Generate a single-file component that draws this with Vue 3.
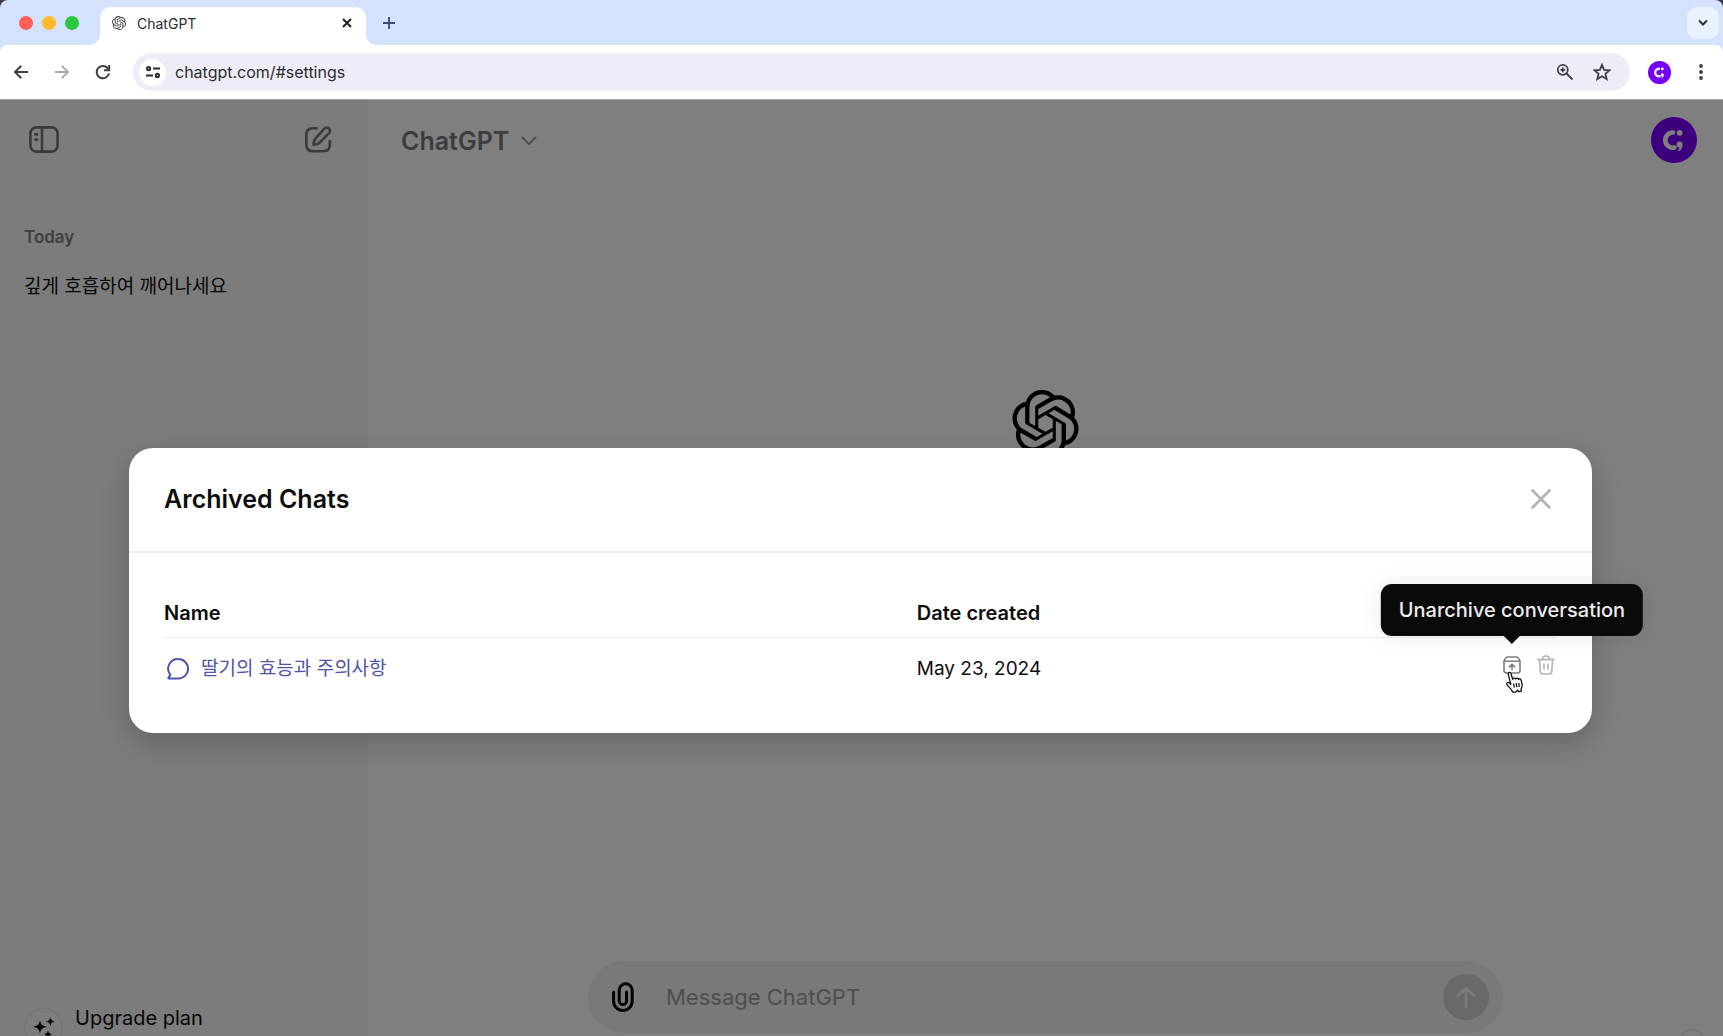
<template>
  <div class="browser">
    <header class="chrome">
      <div class="tab-strip">
        <div class="window-controls">
          <button class="light red" aria-label="Close window"></button>
          <button class="light yellow" aria-label="Minimize window"></button>
          <button class="light green" aria-label="Zoom window"></button>
        </div>
        <div class="tab">
          <svg class="favicon" viewBox="0 0 24 24" fill="currentColor"><path :d="logoPath" /></svg>
          <span class="tab-title">ChatGPT</span>
          <button class="icon-btn tab-close" aria-label="Close tab">
            <svg width="10" height="10" viewBox="0 0 10 10" fill="none" stroke="currentColor" stroke-width="2"><path d="M1 1l8 8M9 1L1 9" /></svg>
          </button>
        </div>
        <button class="icon-btn new-tab" aria-label="New tab">
          <svg width="12" height="12" viewBox="0 0 12 12" fill="none" stroke="currentColor" stroke-width="1.8"><path d="M6 0v12M0 6h12" /></svg>
        </button>
        <button class="icon-btn tab-search" aria-label="Search tabs">
          <svg width="10" height="8" viewBox="0 0 10 8" fill="none" stroke="currentColor" stroke-width="2"><path d="M1 1.5l4 4 4-4" /></svg>
        </button>
      </div>

      <div class="toolbar">
        <nav class="nav-buttons">
          <button class="icon-btn" aria-label="Back">
            <svg width="16" height="16" viewBox="0 0 16 16" fill="none" stroke="currentColor" stroke-width="2"><path d="M15 8H2M8.2 1.8L2 8l6.2 6.2" /></svg>
          </button>
          <button class="icon-btn disabled" aria-label="Forward">
            <svg width="16" height="16" viewBox="0 0 16 16" fill="none" stroke="currentColor" stroke-width="1.8"><path d="M1 8h13M7.8 1.8L14 8l-6.2 6.2" /></svg>
          </button>
          <button class="icon-btn" aria-label="Reload">
            <svg width="16" height="16" viewBox="0 0 16 16" fill="none" stroke="currentColor" stroke-width="2"><path d="M14 9.4A6.2 6.2 0 1 1 12.6 4L14 5.5" /><path d="M14.2 1v5.2H9" /></svg>
          </button>
        </nav>
        <div class="omnibox">
          <button class="icon-btn site-info" aria-label="View site information">
            <svg width="14" height="12" viewBox="0 0 14 12" fill="none" stroke="currentColor" stroke-width="2"><circle cx="2.600" cy="2.600" r="1.600" /><path d="M7 2.600h7M0 9.400h7" /><circle cx="11.400" cy="9.400" r="1.600" /></svg>
          </button>
          <input v-model="url" class="url" type="text" aria-label="Address" />
          <button class="icon-btn" aria-label="Zoom">
            <svg width="18" height="18" viewBox="0 0 18 18" fill="none" stroke="currentColor" stroke-width="1.8"><circle cx="6.8" cy="6.8" r="5" /><path d="M10.5 10.5l6 6M6.8 4.4v4.8M4.4 6.8h4.8" /></svg>
          </button>
          <button class="icon-btn" aria-label="Bookmark this tab">
            <svg width="18" height="18" viewBox="0 0 18 18" fill="none" stroke="currentColor" stroke-width="1.8"><path d="M9 1.8l2.1 5 5.4.5-4.1 3.5 1.3 5.3L9 13.3l-4.7 2.8 1.3-5.3-4.1-3.5 5.4-.5z" /></svg>
          </button>
        </div>
        <button class="icon-btn profile" aria-label="Profile">
          <svg width="23" height="23" viewBox="0 0 46 46"><circle cx="23" cy="23" r="23" fill="#7300f8" /><g fill="#fff"><path :d="avatarArc" fill="none" stroke="#fff" stroke-width="4.6" stroke-linecap="round" /><circle cx="28.6" cy="15.8" r="2.9" /><path :d="avatarComma" /></g></svg>
        </button>
        <button class="icon-btn more" aria-label="Customize and control">
          <svg width="4" height="16" viewBox="0 0 4 16" fill="currentColor"><circle cx="2" cy="2" r="1.9" /><circle cx="2" cy="8" r="1.9" /><circle cx="2" cy="14" r="1.9" /></svg>
        </button>
      </div>
    </header>

    <div class="page">
      <aside class="sidebar">
        <div class="sidebar-top">
          <button class="icon-btn" aria-label="Close sidebar">
            <svg width="30" height="27" viewBox="0 0 30 27" fill="none" stroke="currentColor" stroke-width="2.6" stroke-linecap="round"><rect x="1.4" y="1.4" width="27.2" height="24.2" rx="6" /><path d="M13 1.4v24.2M6.4 8.4h1.6M6.4 13.6h1.6" /></svg>
          </button>
          <button class="icon-btn" aria-label="New chat">
            <svg width="27" height="27" viewBox="0 0 28 28" fill="none" stroke="currentColor" stroke-width="2.7" stroke-linecap="round" stroke-linejoin="round"><path d="M12.2 2.4H8.4c-5 0-7 2-7 7v9.8c0 5 2 7 7 7h10.4c5 0 7-2 7-7v-3.6" /><path d="M20.2 2.8c1.4-1.4 3.4-1.4 4.7-.2 1.4 1.3 1.3 3.4 0 4.8L15 17.4c-.9.9-1.9 1.3-3 1.5l-3.2.5.5-3.2c.2-1.2.7-2.2 1.5-3z" /></svg>
          </button>
        </div>
        <h2 class="group-title">Today</h2>
        <a href="#" class="history-link">깊게 호흡하여 깨어나세요</a>
        <div class="upgrade">
          <span class="upgrade-icon">
            <svg width="22" height="22" viewBox="0 0 22 22" fill="currentColor"><path d="M7 3.2c.9 4.3 2 5.4 6.8 6.5C9 10.8 7.9 12 7 16.4c-.9-4.4-2-5.6-6.8-6.7C5 8.6 6.1 7.5 7 3.2z" /><path d="M17.4 0c.6 3 1.3 3.8 4.6 4.6-3.3.8-4 1.6-4.6 4.6-.6-3-1.3-3.8-4.6-4.600 3.3-.8 4-1.600 4.600-4.600z" /><path d="M15 13c.6 2.800 1.300 3.600 4.400 4.300-3.100.8-3.800 1.500-4.400 4.400-.6-2.900-1.300-3.600-4.400-4.400 3.100-.7 3.800-1.500 4.400-4.300z" /></svg>
          </span>
          <a href="#" class="upgrade-link">Upgrade plan</a>
        </div>
      </aside>

      <main class="main">
        <div class="main-top">
          <button class="icon-btn model-switch">
            ChatGPT
            <svg width="16" height="10" viewBox="0 0 16 10" fill="none" stroke="#949494" stroke-width="1.8" stroke-linecap="round" stroke-linejoin="round"><path d="M1.5 1.5L8 8.2l6.5-6.7" /></svg>
          </button>
          <button class="icon-btn" aria-label="Account">
            <svg width="46" height="46" viewBox="0 0 46 46"><circle cx="23" cy="23" r="23" fill="#7a00fb" /><g fill="#fff"><path :d="avatarArc" fill="none" stroke="#fff" stroke-width="4.6" stroke-linecap="round" /><circle cx="28.6" cy="15.8" r="2.9" /><path :d="avatarComma" /></g></svg>
          </button>
        </div>
        <div class="hero">
          <svg width="67" height="67" viewBox="0 0 24 24" fill="currentColor"><path :d="logoPath" /></svg>
        </div>
        <form class="composer" @submit.prevent>
          <button type="button" class="icon-btn attach" aria-label="Attach file">
            <svg width="22" height="30" viewBox="0 0 22 30" fill="none" stroke="currentColor" stroke-width="3" stroke-linecap="round"><path d="M1.6 10v9.2a9.3 9.3 0 0 0 18.6 0V8.3a6.5 6.5 0 0 0-13 0v10.6a3.7 3.7 0 0 0 7.4 0V10" /></svg>
          </button>
          <input v-model="message" class="message" type="text" placeholder="Message ChatGPT" aria-label="Message ChatGPT" />
          <button class="icon-btn send" aria-label="Send">
            <svg width="20" height="22" viewBox="0 0 20 22" fill="none" stroke="currentColor" stroke-width="3" stroke-linecap="round" stroke-linejoin="round"><path d="M10 20.4V2M2 9.8L10 2l8 7.8" /></svg>
          </button>
        </form>
        <button class="help" aria-label="Help"></button>
      </main>

      <div class="overlay">
        <section class="modal" role="dialog" aria-labelledby="modal-title">
          <div class="modal-header">
            <h1 id="modal-title" class="modal-title">Archived Chats</h1>
            <button class="icon-btn modal-close" aria-label="Close">
              <svg width="20" height="20" viewBox="0 0 20 20" fill="none" stroke="currentColor" stroke-width="2.6" stroke-linecap="round"><path d="M1.5 1.5l17 17M18.5 1.5l-17 17" /></svg>
            </button>
          </div>
          <div class="modal-body">
            <table class="chats">
              <thead>
                <tr>
                  <th class="col-name">Name</th>
                  <th>Date created</th>
                  <th class="col-actions"></th>
                </tr>
              </thead>
              <tbody>
                <tr v-for="chat in chats" :key="chat.id">
                  <td>
                    <a href="#" class="chat-link">
                      <svg width="22" height="22" viewBox="0 0 22 22" fill="none" stroke="currentColor" stroke-width="2" stroke-linejoin="round"><path d="M11.4 1.1a9.7 9.7 0 1 1 0 19.4H1.9c-.6 0-.8-.5-.4-.9l1.9-2.700A9.700 9.700 0 0 1 11.400 1.100z" /></svg>
                      {{ chat.name }}
                    </a>
                  </td>
                  <td>{{ chat.date }}</td>
                  <td class="cell-actions">
                    <div class="actions">
                      <button class="icon-btn unarchive" aria-label="Unarchive conversation">
                        <svg width="18" height="18" viewBox="0 0 18 18" fill="none" stroke="currentColor" stroke-width="1.6" stroke-linecap="round" stroke-linejoin="round"><path d="M1 5.2h16v9.3c0 1.7-.8 2.5-2.5 2.5h-11C1.8 17 1 16.2 1 14.5zM1 5.2l1.3-2.7C2.8 1.4 3.5 1 4.6 1h8.8c1.1 0 1.8.4 2.3 1.5L17 5.2M9 13.8V8.4M6.4 10.8L9 8.3l2.6 2.5" /></svg>
                        <span class="tooltip" role="tooltip">Unarchive conversation</span>
                        <svg class="cursor" width="20" height="22" viewBox="0 0 20 22" fill="#fff" stroke="#111" stroke-width="1.3" stroke-linejoin="round"><path d="M6.8 13.2L4.3 3.6C3.7 1.2 6.3.5 7 2.7l1.7 5.6c.2-1.5 2.4-1.7 2.9-.2.5-1.2 2.3-1.2 2.8.2.7-.9 2.4-.6 2.7.7.8 2.8 1.6 5 .7 7.3l-.7 1.8.3 2-2.6.6-1.3-1.5-1.9 1.900-3-.1c-.6-2.500-3.300-4.400-5.300-6.900-1.600-2 .5-3.400 2-2.200z" /><path d="M9.600 12.500l.6 4M12.200 12.200l.6 4M14.800 12l.4 4" fill="none" /></svg>
                      </button>
                      <button class="icon-btn trash" aria-label="Delete conversation">
                        <svg width="18" height="20" viewBox="0 0 18 20" fill="none" stroke="currentColor" stroke-width="1.6" stroke-linecap="round" stroke-linejoin="round"><path d="M1 4.6h16M2.4 4.6l.9 12c.1 1.5.9 2.4 2.4 2.4h6.6c1.5 0 2.3-.9 2.4-2.4l.9-12M5.2 4.6C5.5 2.2 6.7 1 9 1s3.5 1.2 3.8 3.6M7 9v5.2M11 9v5.2" /></svg>
                      </button>
                    </div>
                  </td>
                </tr>
              </tbody>
            </table>
          </div>
        </section>
      </div>
    </div>
  </div>
</template>

<script setup>
import { ref } from 'vue'

const url = ref('chatgpt.com/#settings')
const message = ref('')

const chats = ref([
  { id: 1, name: '딸기의 효능과 주의사항', date: 'May 23, 2024' }
])

const avatarArc = 'M22 15.5a7.6 7.6 0 1 0 1.6 15'
const avatarComma = 'M28.6 24.6a3 3 0 0 1 3 3.1c0 2.8-1.5 5.4-3.9 6.5l-.9-.7c1-1 1.5-2 1.6-3.1a2.9 2.9 0 0 1 .2-5.8z'

const logoPath = 'M22.2819 9.8211a5.9847 5.9847 0 0 0-.5157-4.9108 6.0462 6.0462 0 0 0-6.5098-2.9A6.0651 6.0651 0 0 0 4.9807 4.1818a5.9847 5.9847 0 0 0-3.9977 2.9 6.0462 6.0462 0 0 0 .7427 7.0966 5.98 5.98 0 0 0 .511 4.9107 6.051 6.051 0 0 0 6.5146 2.9001A5.9847 5.9847 0 0 0 13.2599 24a6.0557 6.0557 0 0 0 5.7718-4.2058 5.9894 5.9894 0 0 0 3.9977-2.9001 6.0557 6.0557 0 0 0-.7475-7.0729zm-9.022 12.6081a4.4755 4.4755 0 0 1-2.8764-1.0408l.1419-.0804 4.7783-2.7582a.7948.7948 0 0 0 .3927-.6813v-6.7369l2.02 1.1686a.071.071 0 0 1 .038.052v5.5826a4.504 4.504 0 0 1-4.4945 4.4944zm-9.6607-4.1254a4.4708 4.4708 0 0 1-.5346-3.0137l.142.0852 4.783 2.7582a.7712.7712 0 0 0 .7806 0l5.8428-3.3685v2.3324a.0804.0804 0 0 1-.0332.0615L9.74 19.9502a4.4992 4.4992 0 0 1-6.1408-1.6464zM2.3408 7.8956a4.485 4.485 0 0 1 2.3655-1.9728V11.6a.7664.7664 0 0 0 .3879.6765l5.8144 3.3543-2.0201 1.1685a.0757.0757 0 0 1-.071 0l-4.8303-2.7865A4.504 4.504 0 0 1 2.3408 7.872zm16.5963 3.8558L13.1038 8.364 15.1192 7.2a.0757.0757 0 0 1 .071 0l4.8303 2.7913a4.4944 4.4944 0 0 1-.6765 8.1042v-5.6772a.79.79 0 0 0-.407-.667zm2.0107-3.0231l-.142-.0852-4.7735-2.7818a.7759.7759 0 0 0-.7854 0L9.409 9.2297V6.8974a.0662.0662 0 0 1 .0284-.0615l4.8303-2.7866a4.4992 4.4992 0 0 1 6.6802 4.66zM8.3065 12.863l-2.02-1.1638a.0804.0804 0 0 1-.038-.0567V6.0742a4.4992 4.4992 0 0 1 7.3757-3.4537l-.142.0805L8.704 5.459a.7948.7948 0 0 0-.3927.6813zm1.0976-2.3654l2.602-1.4998 2.6069 1.4998v2.9994l-2.5974 1.4997-2.6067-1.4997Z'
</script>

<style>
body {
  margin: 0;
  background: #3a3d49;
}
</style>

<style scoped>
.browser {
  display: flex;
  flex-direction: column;
  height: 100vh;
  overflow: hidden;
  border-radius: 8px 8px 0 0;
  font-family: Inter, "Noto Sans CJK KR", sans-serif;
  color: #0d0d0d;
}

.browser *,
.browser *::before,
.browser *::after {
  box-sizing: border-box;
}

button,
input {
  font: inherit;
  color: inherit;
}

svg {
  display: block;
  flex-shrink: 0;
}

a {
  text-decoration: none;
}

.icon-btn {
  display: flex;
  align-items: center;
  justify-content: center;
  padding: 0;
  border: none;
  background: transparent;
  cursor: pointer;
}

/* Browser chrome */
.chrome {
  flex-shrink: 0;
  background: #d4e2fd;
  color: #3f4045;
}

.tab-strip {
  display: flex;
  align-items: center;
  height: 45px;
  padding-right: 4px;
}

.window-controls {
  display: flex;
  gap: 9px;
  padding: 0 21px 0 19px;
}

.light {
  width: 14px;
  height: 14px;
  padding: 0;
  border: none;
  border-radius: 50%;
}

.red {
  background: #fe5f57;
}

.yellow {
  background: #febb2e;
}

.green {
  background: #29c840;
}

.tab {
  position: relative;
  display: flex;
  align-items: center;
  align-self: flex-end;
  width: 266px;
  height: 38px;
  padding: 0 12px 6px;
  border-radius: 11px 11px 0 0;
  background: #fff;
}

.tab::before,
.tab::after {
  content: "";
  position: absolute;
  bottom: 0;
  width: 11px;
  height: 11px;
}

.tab::before {
  right: 100%;
  background: radial-gradient(circle at 0 0, transparent 11px, #fff 11px);
}

.tab::after {
  left: 100%;
  background: radial-gradient(circle at 100% 0, transparent 11px, #fff 11px);
}

.favicon {
  width: 14px;
  height: 14px;
}

.tab-title {
  flex: 1;
  margin-left: 11px;
  font-size: 14px;
  color: #2a2b2f;
}

.tab-close {
  width: 14px;
  height: 14px;
  color: #1f2024;
}

.new-tab {
  width: 30px;
  height: 30px;
  margin-left: 8px;
  color: #3a4b70;
}

.tab-search {
  width: 32px;
  height: 32px;
  margin-left: auto;
  border-radius: 10px;
  background: #e9f3ff;
  color: #2c3038;
}

.toolbar {
  display: flex;
  align-items: center;
  height: 55px;
  padding: 0 12px 0 9px;
  border-bottom: 1px solid #a6a6a8;
  border-radius: 8px 8px 0 0;
  background: #fff;
}

.nav-buttons {
  display: flex;
  gap: 17px;
  margin-right: 18px;
}

.nav-buttons .icon-btn {
  width: 24px;
  height: 24px;
}

.nav-buttons .icon-btn.disabled {
  color: #a8a8aa;
}

.omnibox {
  display: flex;
  flex: 1;
  align-items: center;
  gap: 19px;
  height: 38px;
  padding: 0 19px 0 6px;
  border-radius: 19px;
  background: #eeecf6;
}

.site-info {
  width: 27px;
  height: 27px;
  border-radius: 50%;
  background: #fff;
  color: #2a2b2f;
}

.url {
  flex: 1;
  min-width: 0;
  margin-left: -10px;
  padding: 0;
  border: none;
  outline: none;
  background: transparent;
  font-size: 16px;
  color: #2c2c30;
}

.profile {
  margin-left: 18px;
}

.more {
  width: 20px;
  height: 24px;
  margin-left: 20px;
}

/* Page */
.page {
  position: relative;
  display: flex;
  flex: 1;
  min-height: 0;
  overflow: hidden;
  background: #fff;
}

.sidebar {
  display: flex;
  flex-direction: column;
  width: 368px;
  padding: 0 24px;
  background: #f8f8f8;
}

.sidebar-top {
  display: flex;
  align-items: center;
  justify-content: space-between;
  height: 79px;
  padding: 0 12px 0 5px;
  color: #747474;
}

.group-title {
  margin: 46px 0 0;
  font-size: 17px;
  font-weight: 600;
  line-height: 24px;
  color: #808080;
}

.history-link {
  margin-top: 24px;
  font-size: 19px;
  line-height: 28px;
  color: #0d0d0d;
}

.upgrade {
  display: flex;
  gap: 12px;
  height: 28px;
  margin-top: auto;
}

.upgrade-icon {
  display: flex;
  align-items: center;
  justify-content: center;
  width: 39px;
  height: 39px;
  border: 1px solid #e4e4e4;
  border-radius: 50%;
}

.upgrade-link {
  font-size: 20px;
  line-height: 20px;
  color: #0d0d0d;
}

.main {
  position: relative;
  display: flex;
  flex: 1;
  flex-direction: column;
  align-items: center;
}

.main-top {
  display: flex;
  align-items: center;
  justify-content: space-between;
  width: 100%;
  height: 80px;
  padding: 0 26px 0 33px;
}

.model-switch {
  gap: 12px;
  padding-top: 2px;
  font-size: 25px;
  font-weight: 600;
  color: #7a7a7a;
}

.hero {
  flex: 1;
  padding-top: 210px;
  color: #000;
}

.composer {
  display: flex;
  align-items: center;
  width: 68%;
  max-width: 915px;
  height: 72px;
  margin-bottom: 3px;
  padding: 0 14px 0 24px;
  border-radius: 36px;
  background: #f2f2f2;
}

.attach {
  color: #000;
}

.message {
  flex: 1;
  min-width: 0;
  margin-left: 32px;
  padding: 0;
  border: none;
  outline: none;
  background: transparent;
  font-size: 22px;
}

.message::placeholder {
  color: #9c9c9c;
  opacity: 1;
}

.send {
  width: 46px;
  height: 46px;
  border-radius: 50%;
  background: #d2d2d2;
  color: #f4f4f4;
}

.help {
  position: absolute;
  right: 17px;
  bottom: -21px;
  width: 28px;
  height: 28px;
  border: 1px solid #dcdcdc;
  border-radius: 50%;
  background: #fff;
}

/* Dialog */
.overlay {
  position: absolute;
  inset: 0;
  display: flex;
  align-items: center;
  justify-content: center;
  padding: 44px 2px 0 0;
  background: rgba(0, 0, 0, 0.5);
}

.modal {
  width: 85%;
  border-radius: 24px;
  background: #fff;
  box-shadow: 0 10px 30px rgba(0, 0, 0, 0.2);
}

.modal-header {
  display: flex;
  align-items: center;
  justify-content: space-between;
  height: 105px;
  padding: 0 41px 0 35px;
  border-bottom: 2px solid #efefef;
}

.modal-title {
  margin: 0;
  font-size: 25px;
  font-weight: 600;
}

.modal-close {
  color: #b3b3b3;
}

.modal-body {
  padding: 35px 34px 33px 35px;
}

.chats {
  width: 100%;
  border-collapse: collapse;
  font-size: 19px;
  line-height: 28px;
  text-align: left;
}

.chats th {
  height: 50px;
  padding: 2px 0 0;
  border-bottom: 1px solid #ececec;
  font-size: 20px;
  font-weight: 600;
}

.chats td {
  height: 62px;
  padding: 0;
}

.col-name {
  width: 54%;
}

.col-actions {
  width: 80px;
}

.chat-link {
  display: flex;
  align-items: center;
  gap: 12px;
  padding-left: 3px;
  color: #5054a8;
}

.chats .cell-actions {
  padding-bottom: 8px;
}

.actions {
  display: flex;
  gap: 10px;
  justify-content: flex-end;
}

.actions .icon-btn {
  width: 24px;
  height: 24px;
}

.unarchive {
  position: relative;
  color: #7d7d7d;
}

.trash {
  color: #b4b4b4;
}

.tooltip {
  position: absolute;
  bottom: calc(100% + 17px);
  left: 50%;
  padding: 12px 18px;
  border-radius: 11px;
  background: #0a0a0a;
  box-shadow: 0 0 24px rgba(0, 0, 0, 0.08);
  color: #ececec;
  font-size: 20px;
  font-weight: 500;
  line-height: 28px;
  white-space: nowrap;
  transform: translateX(-50%);
}

.tooltip::after {
  content: "";
  position: absolute;
  top: 100%;
  left: 50%;
  margin-left: -8px;
  border: 8px solid transparent;
  border-bottom: none;
  border-top-color: #0a0a0a;
}

.cursor {
  position: absolute;
  top: 18px;
  left: 4px;
}
</style>
